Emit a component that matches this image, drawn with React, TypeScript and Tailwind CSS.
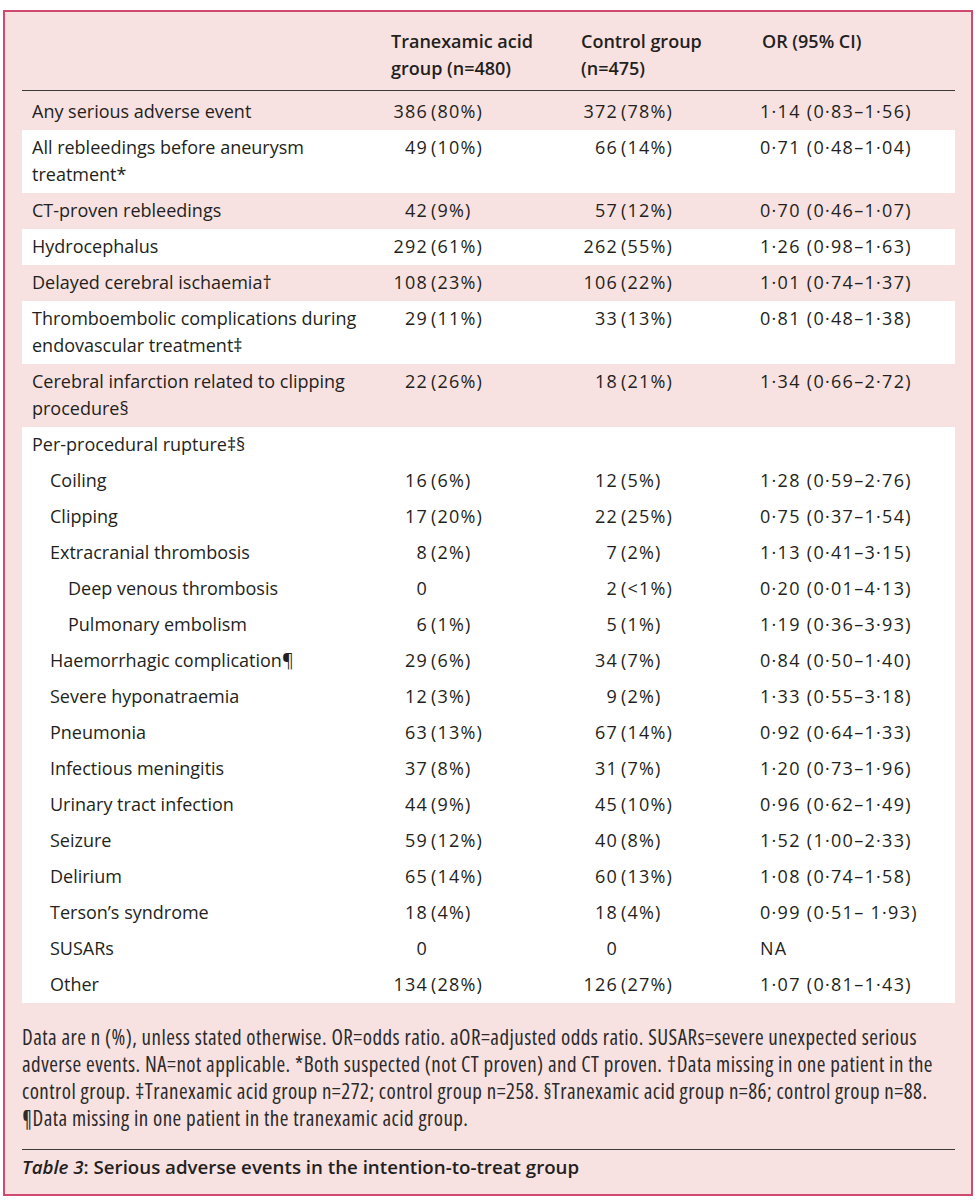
import React from "react";

type Row = {
  label: string;
  indent?: 0 | 1 | 2;
  a?: [string, string];
  b?: [string, string];
  or?: string;
  bg: "pink" | "white";
  label2?: string;
};

const rows: Row[] = [
  { label: "Any serious adverse event", a: ["386", "(80%)"], b: ["372", "(78%)"], or: "1·14 (0·83–1·56)", bg: "pink" },
  { label: "All rebleedings before aneurysm", label2: "treatment*", a: ["49", "(10%)"], b: ["66", "(14%)"], or: "0·71 (0·48–1·04)", bg: "white" },
  { label: "CT-proven rebleedings", a: ["42", "(9%)"], b: ["57", "(12%)"], or: "0·70 (0·46–1·07)", bg: "pink" },
  { label: "Hydrocephalus", a: ["292", "(61%)"], b: ["262", "(55%)"], or: "1·26 (0·98–1·63)", bg: "white" },
  { label: "Delayed cerebral ischaemia†", a: ["108", "(23%)"], b: ["106", "(22%)"], or: "1·01 (0·74–1·37)", bg: "pink" },
  { label: "Thromboembolic complications during", label2: "endovascular treatment‡", a: ["29", "(11%)"], b: ["33", "(13%)"], or: "0·81 (0·48–1·38)", bg: "white" },
  { label: "Cerebral infarction related to clipping", label2: "procedure§", a: ["22", "(26%)"], b: ["18", "(21%)"], or: "1·34 (0·66–2·72)", bg: "pink" },
  { label: "Per-procedural rupture‡§", bg: "white" },
  { label: "Coiling", indent: 1, a: ["16", "(6%)"], b: ["12", "(5%)"], or: "1·28 (0·59–2·76)", bg: "white" },
  { label: "Clipping", indent: 1, a: ["17", "(20%)"], b: ["22", "(25%)"], or: "0·75 (0·37–1·54)", bg: "white" },
  { label: "Extracranial thrombosis", indent: 1, a: ["8", "(2%)"], b: ["7", "(2%)"], or: "1·13 (0·41–3·15)", bg: "white" },
  { label: "Deep venous thrombosis", indent: 2, a: ["0", ""], b: ["2", "(<1%)"], or: "0·20 (0·01–4·13)", bg: "white" },
  { label: "Pulmonary embolism", indent: 2, a: ["6", "(1%)"], b: ["5", "(1%)"], or: "1·19 (0·36–3·93)", bg: "white" },
  { label: "Haemorrhagic complication¶", indent: 1, a: ["29", "(6%)"], b: ["34", "(7%)"], or: "0·84 (0·50–1·40)", bg: "white" },
  { label: "Severe hyponatraemia", indent: 1, a: ["12", "(3%)"], b: ["9", "(2%)"], or: "1·33 (0·55–3·18)", bg: "white" },
  { label: "Pneumonia", indent: 1, a: ["63", "(13%)"], b: ["67", "(14%)"], or: "0·92 (0·64–1·33)", bg: "white" },
  { label: "Infectious meningitis", indent: 1, a: ["37", "(8%)"], b: ["31", "(7%)"], or: "1·20 (0·73–1·96)", bg: "white" },
  { label: "Urinary tract infection", indent: 1, a: ["44", "(9%)"], b: ["45", "(10%)"], or: "0·96 (0·62–1·49)", bg: "white" },
  { label: "Seizure", indent: 1, a: ["59", "(12%)"], b: ["40", "(8%)"], or: "1·52 (1·00–2·33)", bg: "white" },
  { label: "Delirium", indent: 1, a: ["65", "(14%)"], b: ["60", "(13%)"], or: "1·08 (0·74–1·58)", bg: "white" },
  { label: "Terson’s syndrome", indent: 1, a: ["18", "(4%)"], b: ["18", "(4%)"], or: "0·99 (0·51– 1·93)", bg: "white" },
  { label: "SUSARs", indent: 1, a: ["0", ""], b: ["0", ""], or: "NA", bg: "white" },
  { label: "Other", indent: 1, a: ["134", "(28%)"], b: ["126", "(27%)"], or: "1·07 (0·81–1·43)", bg: "white" },
];

function Num({ v }: { v?: [string, string] }) {
  if (!v) return <div />;
  return (
    <div className="flex items-start tracking-[1.2px] whitespace-nowrap">
      <span className="w-[37px] text-right">{v[0]}</span>
      {v[1] && <span className="ml-[3px]">{v[1]}</span>}
    </div>
  );
}

export default function App() {
  return (
    <div
      className="w-[979px] h-[1200px] bg-white pt-[10px] pl-[3px] text-[#231f20]"
      style={{ fontFamily: "'Open Sans', 'Noto Sans', sans-serif" }}
    >
      <div className="w-[970px] h-[1186px] border-2 border-[#cf4a6f] bg-[#f7e1e1] pl-[17px] pr-[16px]">
        <div className="text-[18px] leading-[27px]">
          <div className="grid grid-cols-[369px_190px_179px_1fr] pt-[16px] pb-[8px] border-b border-[#3a3a3a] font-semibold">
            <div />
            <div>
              Tranexamic acid
              <br />
              group (n=480)
            </div>
            <div>
              Control group
              <br />
              (n=475)
            </div>
            <div className="pl-[2px]">OR (95% CI)</div>
          </div>
          {rows.map((r, i) => {
            const pad = r.indent === 2 ? "pl-[46px]" : r.indent === 1 ? "pl-[28px]" : "pl-[10px]";
            const bg = r.bg === "pink" ? "bg-[#f7e1e1]" : "bg-white";
            const py = i === 0 ? "pt-[7px] pb-[5px]" : "pt-[4px] pb-[5px]";
            return (
              <div key={i} className={`grid grid-cols-[369px_190px_179px_1fr] ${bg} ${py}`}>
                <div className={`${pad} whitespace-nowrap`}>
                  {r.label}
                  {r.label2 && (
                    <>
                      <br />
                      {r.label2}
                    </>
                  )}
                </div>
                <Num v={r.a} />
                <Num v={r.b} />
                <div className="tracking-[1.3px] whitespace-nowrap">{r.or}</div>
              </div>
            );
          })}
        </div>
        <div className="mt-[21px] text-[21px] leading-[27px] text-[#2b2b2b] [font-stretch:87.5%] tracking-[0.45px] whitespace-nowrap">
          Data are n (%), unless stated otherwise. OR=odds ratio. aOR=adjusted odds ratio. SUSARs=severe unexpected serious
          <br />
          adverse events. NA=not applicable. *Both suspected (not CT proven) and CT proven. †Data missing in one patient in the
          <br />
          control group. ‡Tranexamic acid group n=272; control group n=258. §Tranexamic acid group n=86; control group n=88.
          <br />
          ¶Data missing in one patient in the tranexamic acid group.
        </div>
        <div className="mt-[17px] border-t border-[#3a3a3a] pt-[3px] text-[18.7px] leading-[27px] font-semibold [font-stretch:90%] text-[#231f20]">
          <span className="italic">Table 3</span>: Serious adverse events in the intention-to-treat group
        </div>
      </div>
    </div>
  );
}
